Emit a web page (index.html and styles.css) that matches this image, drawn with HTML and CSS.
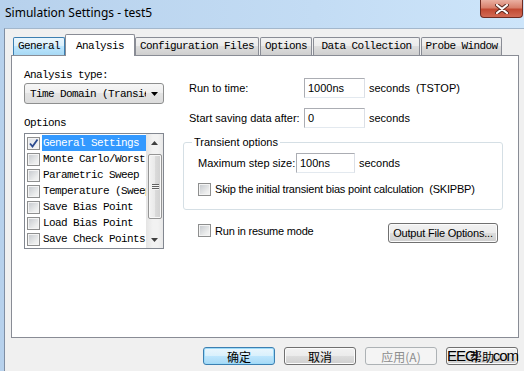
FILE: index.html
```html
<!DOCTYPE html>
<html lang="en">

<head>
    <meta charset="UTF-8">
    <title>Simulation Settings - test5</title>
    <link rel="stylesheet" href="styles.css">
</head>

<body>
    <div class="window">
        <div class="titlebar">
            <span class="title">Simulation Settings - test5</span>
            <span class="close">
                <svg width="14" height="10" viewBox="0 0 14 10">
                    <path d="M2 1 L12 9 M12 1 L2 9" stroke="#5b2a22" stroke-width="4" stroke-linecap="round" fill="none"/>
                    <path d="M2 1 L12 9 M12 1 L2 9" stroke="#ffffff" stroke-width="2.2" stroke-linecap="round" fill="none"/>
                </svg>
            </span>
        </div>

        <div class="client">
            <div class="tabs">
                <span class="tab tab-general hover">General</span>
                <span class="tab tab-analysis active">Analysis</span>
                <span class="tab tab-config">Configuration Files</span>
                <span class="tab tab-options">Options</span>
                <span class="tab tab-data">Data Collection</span>
                <span class="tab tab-probe">Probe Window</span>
            </div>

            <div class="panel">
                <div class="left">
                    <div class="caption">Analysis type:</div>
                    <div class="combo">
                        <span class="combo-text">Time Domain (Transient)</span>
                        <svg class="combo-arrow" width="7" height="4" viewBox="0 0 7 4">
                            <path d="M0 0 H7 L3.5 4 Z" fill="#000"/>
                        </svg>
                    </div>

                    <div class="caption options-caption">Options</div>
                    <div class="listbox">
                        <ul class="items">
                            <li class="selected"><span class="check checked"><svg width="11" height="11" viewBox="0 0 11 11"><path d="M2 5.5 L4.5 8.5 L9.5 1.5" stroke="#2b4a8f" stroke-width="1.8" fill="none"/></svg></span><span class="item-text">General Settings</span></li>
                            <li><span class="check"></span><span class="item-text">Monte Carlo/Worst Case</span></li>
                            <li><span class="check"></span><span class="item-text">Parametric Sweep</span></li>
                            <li><span class="check"></span><span class="item-text">Temperature (Sweep)</span></li>
                            <li><span class="check"></span><span class="item-text">Save Bias Point</span></li>
                            <li><span class="check"></span><span class="item-text">Load Bias Point</span></li>
                            <li><span class="check"></span><span class="item-text">Save Check Points</span></li>
                        </ul>
                        <div class="scrollbar">
                            <div class="sb-btn">
                                <svg width="7" height="4" viewBox="0 0 7 4"><path d="M0 4 H7 L3.5 0 Z" fill="#404040"/></svg>
                            </div>
                            <div class="sb-track">
                                <div class="thumb">
                                    <span class="grip"></span>
                                    <span class="grip"></span>
                                    <span class="grip"></span>
                                </div>
                            </div>
                            <div class="sb-btn">
                                <svg width="7" height="4" viewBox="0 0 7 4"><path d="M0 0 H7 L3.5 4 Z" fill="#404040"/></svg>
                            </div>
                        </div>
                    </div>
                </div>

                <div class="right">
                    <div class="field">
                        <span class="field-label">Run to time:</span>
                        <span class="textbox">1000ns</span>
                        <span class="unit">seconds &nbsp;(TSTOP)</span>
                    </div>
                    <div class="field">
                        <span class="field-label">Start saving data after:</span>
                        <span class="textbox">0</span>
                        <span class="unit">seconds</span>
                    </div>

                    <fieldset class="group">
                        <legend>Transient options</legend>
                        <div class="field inner">
                            <span class="field-label short">Maximum step size:</span>
                            <span class="textbox small">100ns</span>
                            <span class="unit">seconds</span>
                        </div>
                        <div class="check-row inner">
                            <span class="check"></span>
                            <span class="check-label">Skip the initial transient bias point calculation &nbsp;(SKIPBP)</span>
                        </div>
                    </fieldset>

                    <div class="bottom-row">
                        <div class="check-row resume">
                            <span class="check"></span>
                            <span class="check-label">Run in resume mode</span>
                        </div>
                        <span class="button output-btn">Output File Options...</span>
                    </div>
                </div>
            </div>

            <div class="actions">
                <span class="button dlg default">确定</span>
                <span class="button dlg">取消</span>
                <span class="button dlg disabled">应用(A)</span>
                <span class="button dlg help">帮助
                    <span class="watermark"><span>EECl</span><span>com</span></span>
                </span>
            </div>
        </div>
    </div>
</body>

</html>
```

FILE: styles.css
```css
* {
    box-sizing: border-box;
    margin: 0;
    padding: 0;
}

body {
    width: 524px;
    height: 371px;
    overflow: hidden;
    background: #f0f0f0;
    color: #000;
    font-family: "Liberation Sans", Arial, sans-serif;
    font-size: 11px;
}

.window {
    height: 371px;
    display: flex;
    flex-direction: column;
    background: linear-gradient(to right, #b7d1ec, #c3dcf4 60%, #cde5fa);
}

/* title bar */

.titlebar {
    height: 28px;
    flex: none;
    display: flex;
    align-items: flex-start;
    padding-left: 5px;
}

.title {
    font-family: "Noto Sans", sans-serif;
    font-size: 12px;
    line-height: 26px;
}

.close {
    margin-left: auto;
    margin-right: 1px;
    width: 43px;
    height: 18px;
    border: 1px solid #6e2b22;
    border-top: none;
    border-radius: 0 0 4px 4px;
    background: linear-gradient(#eab0a2, #d8806c 45%, #c24a33 55%, #d26a55);
    display: flex;
    align-items: center;
    justify-content: center;
}

/* client area */

.client {
    flex: 1;
    margin-left: 4px;
    background: #f0f0f0;
    border-left: 1px solid #7f8ea3;
    border-top: 1px solid #a3b7cc;
    display: flex;
    flex-direction: column;
}

.tabs {
    display: flex;
    align-items: flex-end;
    height: 22px;
    margin: 5px 0 -1px 8px;
    position: relative;
    z-index: 1;
    font-family: "Liberation Mono", monospace;
    font-size: 11px;
    letter-spacing: -0.6px;
}

.tab {
    height: 18px;
    margin-bottom: 1px;
    margin-right: 1px;
    border: 1px solid #898c95;
    border-bottom: none;
    border-radius: 2px 2px 0 0;
    background: linear-gradient(#f2f2f2, #ebebeb 50%, #dddddd 50%, #cfcfcf);
    text-align: center;
    line-height: 17px;
}

.tab.hover {
    border-color: #3c7fb1;
    background: linear-gradient(#eaf6fd, #d9f0fc 50%, #bee6fd 50%, #a7d9f5);
}

.tab.active {
    height: 22px;
    margin-bottom: 0;
    margin-left: -1px;
    margin-right: 0;
    padding-top: 2px;
    line-height: 18px;
    background: #fff;
}

.tab-general { width: 52px; }
.tab-analysis { width: 70px; }
.tab-config { width: 124px; }
.tab-options { width: 52px; }
.tab-data { width: 107px; }
.tab-probe { width: 81px; }

.panel {
    height: 283px;
    margin: 0 5px 0 6px;
    background: #fff;
    border: 1px solid #898c95;
    display: flex;
    padding: 13px 0 0 12px;
}

/* left column */

.left {
    width: 140px;
    flex: none;
    font-family: "Liberation Mono", monospace;
    font-size: 11px;
    letter-spacing: -0.6px;
}

.caption {
    height: 12px;
    line-height: 12px;
}

.combo {
    margin-top: 2px;
    height: 21px;
    border: 1px solid #8e8f8f;
    border-radius: 3px;
    background: linear-gradient(#f6f6f6, #eeeeee 50%, #e3e3e3 50%, #dcdcdc);
    display: flex;
    align-items: center;
    padding-left: 5px;
}

.combo-text {
    width: 116px;
    overflow: hidden;
    white-space: nowrap;
}

.combo-arrow {
    margin-left: 5px;
}

.options-caption {
    margin-top: 13px;
}

.listbox {
    margin-top: 4px;
    height: 116px;
    border: 1px solid #828790;
    display: flex;
}

.items {
    width: 121px;
    padding-top: 1px;
    list-style: none;
}

.items li {
    height: 16px;
    display: flex;
    align-items: center;
    padding-left: 2px;
}

.item-text {
    flex: 1;
    margin-left: 2px;
    padding-left: 1px;
    height: 16px;
    line-height: 16px;
    overflow: hidden;
    white-space: nowrap;
}

.selected .item-text {
    background: #3399ff;
    color: #fff;
}

.check {
    width: 13px;
    height: 13px;
    flex: none;
    border: 1px solid #8e8f8f;
    background: linear-gradient(135deg, #c3c7cc, #eceded 70%, #f6f6f6);
    box-shadow: inset 0 0 0 1px #f4f4f4;
    display: flex;
    align-items: center;
    justify-content: center;
}

.check.checked {
    background: linear-gradient(135deg, #dfe3ea, #f6f6f6);
}

.scrollbar {
    width: 17px;
    display: flex;
    flex-direction: column;
    background: linear-gradient(to right, #e4e4e4, #f2f2f2 40%, #f2f2f2 70%, #e8e8e8);
}

.sb-btn {
    height: 17px;
    display: flex;
    align-items: center;
    justify-content: center;
}

.sb-track {
    flex: 1;
    padding: 3px 1px 0 2px;
}

.thumb {
    height: 65px;
    border: 1px solid #959595;
    border-radius: 2px;
    background: linear-gradient(to right, #f3f3f3, #e9e9e9 50%, #dbdbdb 50%, #d0d0d0);
    box-shadow: inset 0 0 0 1px #f8f8f8;
    display: flex;
    flex-direction: column;
    align-items: center;
    justify-content: center;
    gap: 1px;
}

.grip {
    width: 7px;
    height: 1px;
    background: #606060;
    box-shadow: 0 1px 0 #f4f4f4;
}

/* right column */

.right {
    width: 320px;
    margin-left: 19px;
    padding-top: 9px;
}

.field {
    display: flex;
    align-items: center;
    height: 20px;
    padding-left: 6px;
}

.field + .field {
    margin-top: 10px;
}

.field-label {
    width: 115px;
}

.field-label.short {
    width: 98px;
}

.textbox {
    width: 61px;
    height: 20px;
    border: 1px solid #abadb3;
    border-right-color: #dbdfe6;
    border-bottom-color: #e3e9ef;
    background: #fff;
    padding-left: 3px;
    line-height: 18px;
}

.textbox.small {
    width: 59px;
}

.unit {
    margin-left: 4px;
}

.group {
    margin-top: 8px;
    border: 1px solid #d5dfe5;
    border-radius: 3px;
    padding: 5px 0 12px 8px;
}

.group legend {
    padding: 0 2px;
    line-height: 12px;
}

.inner {
    padding-left: 6px;
}

.check-row {
    display: flex;
    align-items: center;
    height: 16px;
    margin-top: 8px;
}

.check-label {
    margin-left: 4px;
    letter-spacing: -0.2px;
}

.bottom-row {
    display: flex;
    justify-content: space-between;
    align-items: flex-start;
    margin-top: 13px;
    padding: 0 5px 0 15px;
}

.check-row.resume {
    margin-top: 1px;
    height: 13px;
}

.button {
    height: 20px;
    border: 1px solid #707070;
    border-radius: 3px;
    background: linear-gradient(#f2f2f2, #ebebeb 50%, #dddddd 50%, #cfcfcf);
    box-shadow: inset 0 0 0 1px #fbfbfb;
    display: flex;
    align-items: center;
    justify-content: center;
}

.output-btn {
    width: 110px;
    letter-spacing: -0.2px;
}

/* dialog buttons */

.actions {
    display: flex;
    justify-content: flex-end;
    gap: 9px;
    margin-top: 9px;
    padding-right: 6px;
}

.button.dlg {
    width: 72px;
    height: 18px;
    font-family: "Noto Sans CJK SC", sans-serif;
    font-size: 12px;
}

.button.default {
    border-color: #3c7fb1;
    background: linear-gradient(#eaf6fd, #d9f0fc 50%, #bee6fd 50%, #a7d9f5);
    box-shadow: inset 0 0 0 1px #9ddbf9;
}

.button.disabled {
    border-color: #adb2b5;
    background: #f4f4f4;
    box-shadow: none;
    color: #8d8d8d;
}

.help {
    position: relative;
}

.watermark {
    position: absolute;
    left: 0;
    right: -1px;
    top: -1px;
    display: flex;
    justify-content: space-between;
    font-family: "Liberation Sans", sans-serif;
    font-size: 15px;
    letter-spacing: -1px;
    line-height: 18px;
}
```
